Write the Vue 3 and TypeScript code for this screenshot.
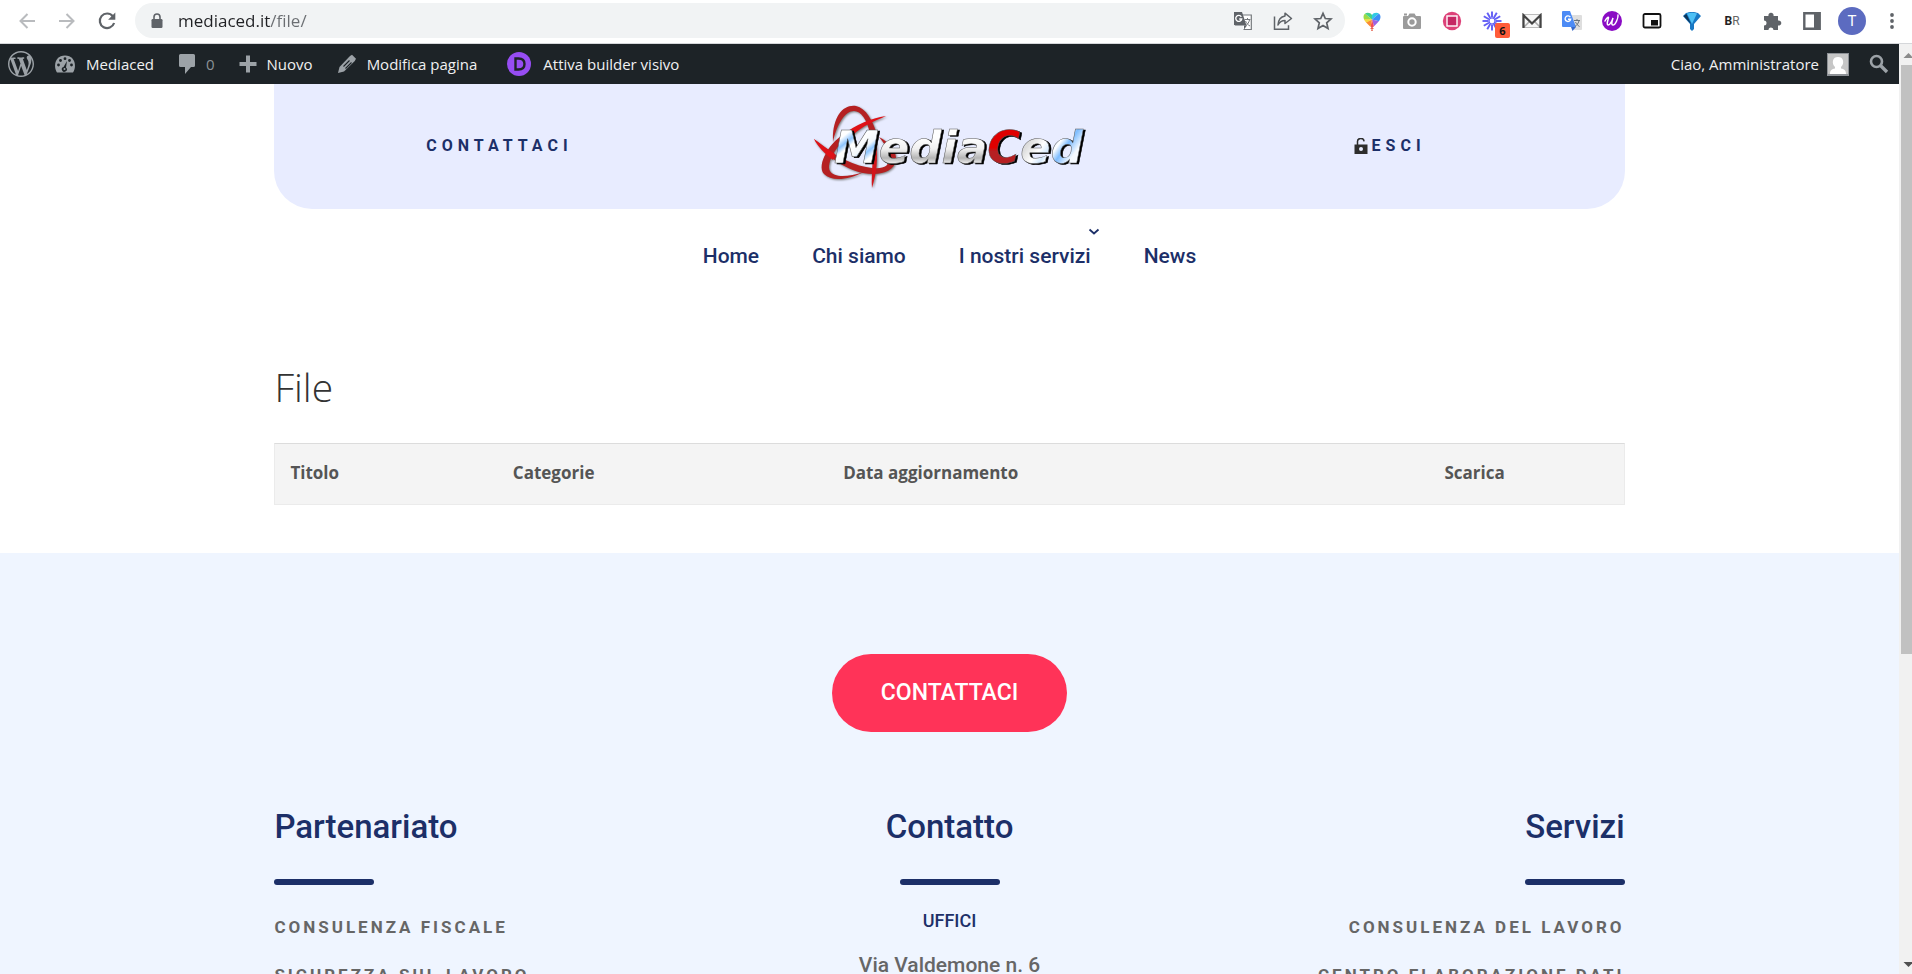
<script setup lang="ts">
import { ref } from 'vue'

interface NavItem {
  label: string
  submenu: boolean
}

const address = ref<string>('mediaced.it/file/')

const navItems: NavItem[] = [
  { label: 'Home', submenu: false },
  { label: 'Chi siamo', submenu: false },
  { label: 'I nostri servizi', submenu: true },
  { label: 'News', submenu: false },
]

const columns: string[] = ['Titolo', 'Categorie', 'Data aggiornamento', 'Scarica']
const partners: string[] = ['Consulenza fiscale', 'Sicurezza sul lavoro']
const services: string[] = ['Consulenza del lavoro', 'Centro elaborazione dati']
const rays: number[] = [0, 30, 60, 90, 120, 150, 180, 210, 240, 270, 300, 330]
</script>

<template>
  <div class="window">
    <header class="toolbar">
      <button class="tool" aria-label="Indietro">
        <svg width="18" height="18" viewBox="0 0 18 18" fill="none" stroke="#b9bbbe" stroke-width="2"><path d="M17 9H2.500M9.500 2 2.500 9l7 7" /></svg>
      </button>
      <button class="tool" aria-label="Avanti">
        <svg width="18" height="18" viewBox="0 0 18 18" fill="none" stroke="#b9bbbe" stroke-width="2"><path d="M1 9h14.500M8.500 2l7 7-7 7" /></svg>
      </button>
      <button class="tool" aria-label="Ricarica">
        <svg width="20" height="20" viewBox="0 0 20 20"><path d="M15.800 5.200A7.300 7.300 0 1 0 17.100 12" fill="none" stroke="#5f6368" stroke-width="2.200" /><path d="M18.300 1.500v7.200h-7.200z" fill="#5f6368" /></svg>
      </button>
      <div class="omnibox">
        <svg width="12" height="16" viewBox="0 0 12 16"><rect x="0.500" y="6" width="11" height="9" rx="1.200" fill="#5f6368" /><path d="M3 7V4a3 3 0 0 1 6 0v3" fill="none" stroke="#5f6368" stroke-width="1.600" /></svg>
        <input v-model="address" class="url" type="text" aria-label="Indirizzo" />
        <button class="tool" aria-label="Traduci pagina">
          <svg width="20" height="20" viewBox="0 0 20 20"><path d="M8 4h10.300v14.500H10.500" fill="#fff" stroke="#75787c" stroke-width="1.200" /><path d="M1 1h8l4.500 13.500H2.200L1 13.300z" fill="#5f6368" /><path d="M11 14.500h3l-3 4z" fill="#5f6368" /><path d="M8.300 5.800a3 3 0 1 0 .4 2.200H6.200" fill="none" stroke="#fff" stroke-width="1.400" /><path d="M11.500 8.500h6M14.500 7v1.500M16.500 9c-.6 2.500-2 4.500-4 6M12.500 10c1 2 2.500 4 4.500 5" fill="none" stroke="#75787c" /></svg>
        </button>
        <button class="tool" aria-label="Condividi">
          <svg width="20" height="20" viewBox="0 0 20 20" fill="none" stroke="#5f6368" stroke-width="1.500"><path d="M1.500 5.500v12.700h14v-4" /><path d="M12 2.200 18.500 7.500 12 12.500V9.600C8.800 9.600 6.600 11 5 14c.3-5 2.800-8.300 7-9z" stroke-linejoin="round" /></svg>
        </button>
        <button class="tool" aria-label="Aggiungi ai preferiti">
          <svg width="20" height="20" viewBox="0 0 20 20"><path d="m10 2.300 2.300 5.200 5.700.5-4.300 3.800 1.300 5.600-5-3-5 3 1.300-5.600L2 8l5.700-.5z" fill="none" stroke="#5f6368" stroke-width="1.700" /></svg>
        </button>
      </div>
      <div class="extensions">
        <button class="tool" aria-label="Tavolozza colori">
          <svg width="20" height="20" viewBox="0 0 20 20">
            <defs><clipPath id="heart"><path d="M10 17C4 12 1.500 9 1.500 5.800 1.500 1 8 .3 10 4c2-3.700 8.500-3 8.500 1.800C18.500 9 16 12 10 17z" /></clipPath></defs>
            <g clip-path="url(#heart)"><path d="M10 8.500 0 0v9z" fill="#9bdc48" /><path d="M10 8.500 0 0h10z" fill="#45d08a" /><path d="M10 8.500V0h10z" fill="#31c9e4" /><path d="M10 8.500 20 0v11z" fill="#3c8df5" /><path d="M10 8.500 20 11l-7 8z" fill="#9c64e3" /><path d="m10 8.500 3 10.500H8z" fill="#f34c56" /><path d="M10 8.500 8 19 0 13z" fill="#fb8b35" /><path d="M10 8.500 0 14V8z" fill="#f6d743" /></g>
            <path d="m10 16-2 2h4zM9 18.500h2v1.200H9z" fill="#e5624e" />
          </svg>
        </button>
        <button class="tool" aria-label="Cattura schermata">
          <svg width="20" height="18" viewBox="0 0 20 18"><path d="M2 4h4l1.500-2.500h5L14 4h4a1 1 0 0 1 1 1v11a1 1 0 0 1-1 1H2a1 1 0 0 1-1-1V5a1 1 0 0 1 1-1zM2 1.500h3v2H2z" fill="#9b9b9b" /><circle cx="10" cy="10" r="3.700" fill="none" stroke="#fff" stroke-width="2" /></svg>
        </button>
        <button class="tool" aria-label="Registra">
          <svg width="20" height="20" viewBox="0 0 20 20"><circle cx="10" cy="10" r="9.200" fill="#dd4279" /><rect x="5" y="5" width="10" height="10" fill="#c52764" stroke="#fff" stroke-width="1.400" /></svg>
        </button>
        <button class="tool with-badge" aria-label="Loom, 6 notifiche">
          <svg width="20" height="20" viewBox="0 0 20 20" stroke="#625df5" stroke-width="1.900"><path v-for="angle in rays" :key="angle" d="M10 6.500V.5" :transform="`rotate(${angle} 10 10)`" /><circle cx="10" cy="10" r="3" fill="#fff" stroke-width="1.200" /></svg>
          <span class="badge">6</span>
        </button>
        <button class="tool" aria-label="Posta">
          <svg width="20" height="16" viewBox="0 0 20 16"><path d="M1 1.500h18v13H1z" fill="#f7f7f7" stroke="#bbb" /><path d="m2 14 6-6M18 14l-6-6" stroke="#aaa" stroke-width="1.500" /><path d="M1.500 15V2.200L10 10.500l8.500-8.300V15" fill="none" stroke="#444" stroke-width="2.200" /></svg>
        </button>
        <button class="tool" aria-label="Google Traduttore">
          <svg width="20" height="20" viewBox="0 0 20 20"><path d="M7 4h12a1 1 0 0 1 1 1v13a1 1 0 0 1-1 1h-7z" fill="#dedede" /><path d="M1 0h7l6 16H1a1 1 0 0 1-1-1V1a1 1 0 0 1 1-1z" fill="#4c8bf5" /><path d="M9 16h5l-3.500 4z" fill="#3568c9" /><path d="M8.300 6.200a2.800 2.800 0 1 0 .4 2H6" fill="none" stroke="#fff" stroke-width="1.400" /><path d="M12 9.500h6M15 8v1.500M17 10c-1 3-2.500 4.500-4 5.500M13.500 11c1 2 2 3.200 4 4.500" fill="none" stroke="#68737c" /></svg>
        </button>
        <button class="tool" aria-label="Wordtune">
          <svg width="20" height="20" viewBox="0 0 20 20"><circle cx="10" cy="10" r="10" fill="#8a0bc4" /><path d="M3 10c1.500-3 3.500-4.500 3.500-3.500 0 1.500-2.500 7-.5 7.500 2 .5 4.500-5 5-7-.7 2-2.200 7 0 7 2.500 0 5.500-7.500 5-10" fill="none" stroke="#fff" stroke-width="1.500" stroke-linecap="round" /></svg>
        </button>
        <button class="tool" aria-label="Picture in picture">
          <svg width="20" height="16" viewBox="0 0 20 16"><rect x="1.500" y="1" width="17" height="13.500" rx="1.500" fill="#fff" stroke="#111" stroke-width="1.800" /><path d="M9 7h7v5.500H9z" fill="#111" /></svg>
        </button>
        <button class="tool" aria-label="Gemma">
          <svg width="20" height="20" viewBox="0 0 20 20"><path d="M4 2c3-1.500 9-1.500 12 0l3 3-7 8v5l-2 2-2-2v-5L1 5z" fill="#1878c4" /><path d="M5 2.500c3-1 7-1 10 0L10 13z" fill="#4cc0f5" /><path d="m1.500 5 3-2L9 13z" fill="#0e3558" /></svg>
        </button>
        <button class="tool br" aria-label="BR"><b>B</b>R</button>
        <button class="tool" aria-label="Estensioni">
          <svg width="20" height="20" viewBox="0 0 20 20"><path d="M2 5h4.500a2.600 2.600 0 1 1 5 0H16v4.500a2.600 2.600 0 1 1 0 5V19h-4.500a2.500 2.500 0 0 0-5 0H2v-4.500a2.500 2.500 0 0 0 0-5z" fill="#5f6368" /></svg>
        </button>
        <button class="tool" aria-label="Pannello laterale">
          <svg width="18" height="18" viewBox="0 0 18 18"><path d="M1.300 1.300h15.400v15.400H1.300z" fill="#fff" stroke="#5f6368" stroke-width="2.400" /><path d="M11 1h6v16h-6z" fill="#5f6368" /></svg>
        </button>
        <button class="tool" aria-label="Profilo"><span class="profile">T</span></button>
        <button class="tool" aria-label="Menu">
          <svg width="6" height="18" viewBox="0 0 6 18" fill="#5f6368"><circle cx="3" cy="3" r="1.900" /><circle cx="3" cy="9" r="1.900" /><circle cx="3" cy="15" r="1.900" /></svg>
        </button>
      </div>
    </header>

    <div class="viewport">
      <div class="page">
        <nav class="adminbar" aria-label="Barra degli strumenti">
          <a href="#" aria-label="WordPress">
            <svg width="26" height="26" viewBox="0 0 20 20"><path d="M20 10c0-5.510-4.490-10-10-10C4.480 0 0 4.490 0 10c0 5.520 4.480 10 10 10 5.510 0 10-4.480 10-10zM7.780 15.370L4.370 6.220c.55-.02 1.170-.08 1.170-.08.5-.06.44-1.130-.06-1.110 0 0-1.450.11-2.370.11-.18 0-.37 0-.58-.01C4.120 2.690 6.870 1.110 10 1.110c2.330 0 4.450.87 6.050 2.340-.68-.11-1.650.39-1.650 1.580 0 .74.45 1.360.9 2.100.35.610.55 1.360.55 2.460 0 1.490-1.400 5-1.400 5l-3.030-8.370c.54-.02.82-.17.82-.17.5-.05.44-1.250-.06-1.220 0 0-1.440.12-2.380.12-.87 0-2.330-.12-2.330-.12-.5-.03-.56 1.200-.06 1.220l.92.080 1.260 3.410zM17.410 10c.24-.64.74-1.870.43-4.250.7 1.290 1.050 2.710 1.050 4.250 0 3.290-1.730 6.240-4.400 7.780.97-2.590 1.940-5.200 2.920-7.780zM6.100 18.090C3.120 16.650 1.110 13.530 1.110 10c0-1.300.23-2.480.72-3.590C3.250 10.300 4.670 14.200 6.100 18.090zm4.030-6.630l2.580 6.980c-.86.290-1.760.45-2.710.45-.79 0-1.570-.11-2.290-.33.81-2.380 1.620-4.740 2.420-7.100z" fill="#9ca2a7" /></svg>
          </a>
          <a href="#" class="site">
            <svg width="22" height="20" viewBox="0 0 22 20"><path d="M3 18.500C-1.500 11 2 1.500 11 1.500s12.500 9.500 8 17z" fill="#9ca2a7" /><g fill="#1d2327"><circle cx="4.500" cy="11" r="1.400" /><circle cx="6.500" cy="6.500" r="1.400" /><circle cx="11" cy="4.700" r="1.400" /><circle cx="15.500" cy="6.500" r="1.400" /><circle cx="17.500" cy="11" r="1.400" /><path d="m13 7-1 6.500a2.500 2.500 0 1 1-2.500-.5z" /></g><circle cx="10.500" cy="15" r="1" fill="#9ca2a7" /></svg>
            <span>Mediaced</span>
          </a>
          <a href="#" class="comments">
            <svg width="18" height="22" viewBox="0 0 18 22"><path d="M2.500 1h13A1.500 1.500 0 0 1 17 2.500v10a1.500 1.500 0 0 1-1.500 1.500H13l-6 7v-7H2.500A1.500 1.500 0 0 1 1 12.500v-10A1.500 1.500 0 0 1 2.500 1z" fill="#9ca2a7" /></svg>
            <span>0</span>
          </a>
          <a href="#">
            <svg width="18" height="18" viewBox="0 0 18 18"><path d="M7 .5h4V7h6.500v4H11v6.500H7V11H.5V7H7z" fill="#9ca2a7" /></svg>
            <span>Nuovo</span>
          </a>
          <a href="#">
            <svg width="20" height="20" viewBox="0 0 20 20"><path d="m13 2 2-1.300 4 4L17.800 7 7 17.500 1 19l1.500-6z" fill="#9ca2a7" /><path d="m6.500 12.500 6-6M8.500 14.500l6-6" stroke="#1d2327" stroke-width="1.100" /></svg>
            <span>Modifica pagina</span>
          </a>
          <a href="#" class="builder">
            <svg width="24" height="24" viewBox="0 0 24 24"><circle cx="12" cy="12" r="12" fill="#974df3" /><path d="M8.500 6.500h3c3.700 0 6 1.900 6 5.500s-2.300 5.500-6 5.500h-3z" fill="none" stroke="#1d2327" stroke-width="2.400" /></svg>
            <span>Attiva builder visivo</span>
          </a>
          <a href="#" class="account">
            <span>Ciao, Amministratore</span>
            <svg width="22" height="23" viewBox="0 0 22 23"><path d="M0 0h22v23H0z" fill="#8d9196" /><path d="M1 1h20v20H1z" fill="#c6c6c6" /><path d="M3 21c0-4 2-5 5-5.500V14c-2-2-2.500-4-2-6.500C6.500 5 8.500 4 11 4s4.500 1 5 3.500c.5 2.500 0 4.500-2 6.500v1.500c3 .5 5 1.500 5 5.500z" fill="#fff" /></svg>
          </a>
          <button class="search" aria-label="Cerca">
            <svg width="20" height="20" viewBox="0 0 20 20" fill="none" stroke="#9ca2a7"><circle cx="7.500" cy="7.500" r="5.500" stroke-width="2.600" /><path d="m11.500 11.500 6.500 6.500" stroke-width="3.400" /></svg>
          </button>
        </nav>

        <div class="container">
          <div class="masthead">
            <a href="#" class="spaced">Contattaci</a>
            <a href="#" class="logo">
              <svg width="276" height="90" viewBox="32 20 276 90" role="img" aria-label="MediaCed">
                <defs>
                  <linearGradient id="initial" gradientUnits="userSpaceOnUse" x1="60" y1="48" x2="92" y2="88"><stop offset="0.150" stop-color="#fff" /><stop offset="0.280" stop-color="#8cc4ff" /><stop offset="0.380" stop-color="#fff" /><stop offset="0.580" stop-color="#f2f7fc" /><stop offset="0.680" stop-color="#8cc4ff" /><stop offset="0.800" stop-color="#fff" /></linearGradient>
                  <linearGradient id="silver" gradientUnits="userSpaceOnUse" x1="0" y1="50" x2="0" y2="83"><stop offset="0.200" stop-color="#fff" /><stop offset="0.550" stop-color="#f0f0f0" /><stop offset="0.820" stop-color="#b4b4b4" /><stop offset="1" stop-color="#f4f4f4" /></linearGradient>
                  <linearGradient id="ending" gradientUnits="userSpaceOnUse" x1="250" y1="50" x2="300" y2="86"><stop offset="0.100" stop-color="#ddd" /><stop offset="0.300" stop-color="#fff" /><stop offset="0.420" stop-color="#d5e9fc" /><stop offset="0.500" stop-color="#fff" /><stop offset="0.620" stop-color="#7dbcff" /><stop offset="0.800" stop-color="#f6faff" /></linearGradient>
                  <linearGradient id="red" gradientUnits="userSpaceOnUse" x1="0" y1="50" x2="0" y2="83"><stop offset="0.500" stop-color="#df0000" /><stop offset="0.620" stop-color="#b52022" /></linearGradient>
                </defs>
                <g class="swirl">
                  <path d="M53 61C52 36 63 23 76 25c10 2 17 15 21 29l-6 2C87 38 81 30 74 30c-9 0-17 13-21 31z" fill="#b52022" />
                  <path d="M66 52C50 60 36 84 44 93c8 8 24 6 40-2-16 5-30 6-34-1-4-8 6-26 22-38z" fill="#b52022" />
                  <path d="M106 35c-15 2-31 9-42 18l9 1c9-9 22-14 33-19z" fill="#df1117" />
                  <path d="M34 58c14 12 34 25 52 28 15 3 24 1 23-10-1-8-5-14-10-20 10 5 18 14 17 23-2 12-16 16-33 13C64 88 45 74 34 58z" fill="#b52022" />
                  <path d="M34 58c4 8 11 15 19 21l2-6c-8-5-14-10-21-15z" fill="#df1117" />
                  <path d="M96 62c2 15 1 29-4 45-1-15 2-29 0-44z" fill="#d3151b" />
                </g>
                <text class="wordmark" x="54" y="82"><tspan fill="url(#initial)">M</tspan><tspan fill="url(#silver)">edia</tspan><tspan fill="url(#red)">C</tspan><tspan fill="url(#ending)">ed</tspan></text>
              </svg>
            </a>
            <a href="#" class="spaced logout">
              <svg width="14" height="16" viewBox="0 0 14 16"><path d="M.5 6.500h13V16H.5z" fill="#2d2d2d" /><path d="M3.500 7V4a3.300 3.300 0 0 1 6.600-.6" fill="none" stroke="#2d2d2d" stroke-width="1.500" /><circle cx="7" cy="11" r="2" fill="#e8ecff" /></svg>
              <span>Esci</span>
            </a>
          </div>

          <nav class="menu" aria-label="Menu principale">
            <a v-for="item in navItems" :key="item.label" href="#">
              {{ item.label }}
              <svg v-if="item.submenu" class="chevron" width="12" height="8" viewBox="0 0 12 8" fill="none" stroke="#1c2f68" stroke-width="1.800"><path d="m1.500 1.500 4.500 4 4.500-4" /></svg>
            </a>
          </nav>

          <main>
            <h1>File</h1>
            <table>
              <thead>
                <tr><th v-for="column in columns" :key="column" scope="col">{{ column }}</th></tr>
              </thead>
            </table>
          </main>
        </div>

        <footer>
          <div class="container footer-inner">
            <a href="#" class="cta">Contattaci</a>
            <div class="footer-columns">
              <section>
                <h2>Partenariato</h2>
                <ul><li v-for="item in partners" :key="item"><a href="#">{{ item }}</a></li></ul>
              </section>
              <section class="contact">
                <h2>Contatto</h2>
                <h3>Uffici</h3>
                <p>Via Valdemone n. 6</p>
              </section>
              <section class="services">
                <h2>Servizi</h2>
                <ul><li v-for="item in services" :key="item"><a href="#">{{ item }}</a></li></ul>
              </section>
            </div>
          </div>
        </footer>
      </div>
      <div class="scrollbar">
        <svg width="17" height="21" viewBox="0 0 17 21"><path d="m4.500 14 5-5 5 5z" fill="#8b8b8b" /></svg>
        <div class="track"><div class="thumb"></div></div>
        <svg width="17" height="17" viewBox="0 0 17 17"><path d="m4.500 5 5 5 5-5z" fill="#505050" /></svg>
      </div>
    </div>
  </div>
</template>

<style>
body {
  margin: 0;
}
</style>

<style scoped>
.window {
  display: flex;
  flex-direction: column;
  height: 100vh;
  overflow: hidden;
  background: #fff;
  font-family: Roboto, "Liberation Sans", sans-serif;
}

a {
  color: inherit;
  text-decoration: none;
}

button {
  padding: 0;
  border: 0;
  background: none;
  font: inherit;
  cursor: pointer;
}

svg {
  display: block;
  flex: none;
}

.toolbar {
  display: flex;
  flex: none;
  align-items: center;
  padding: 3px 0 5px 7px;
  border-bottom: 1px solid #d5d7da;
}

.tool {
  display: flex;
  flex: none;
  align-items: center;
  justify-content: center;
  width: 40px;
  height: 35px;
}

.omnibox {
  display: flex;
  flex: 1;
  align-items: center;
  height: 35px;
  margin: 0 7px 0 8px;
  padding: 0 2px 0 16px;
  border-radius: 18px;
  background: #f1f3f4;
}

.url {
  flex: 1;
  min-width: 0;
  margin-left: 15px;
  padding: 0;
  border: 0;
  outline: 0;
  background: linear-gradient(90deg, #202124 92px, #6b6e72 92px);
  background-clip: text;
  color: transparent;
  font: 17px/24px "Open Sans", "Noto Sans", sans-serif;
}

.extensions {
  display: flex;
}

.with-badge {
  position: relative;
}

.badge {
  position: absolute;
  right: 2px;
  bottom: 0;
  width: 15px;
  border-radius: 2px;
  background: #ff5c3a;
  color: #111;
  font: 700 11px/15px "Open Sans", sans-serif;
  text-align: center;
}

.br {
  color: #666;
  font-size: 12px;
}

.br b {
  color: #222;
}

.profile {
  width: 28px;
  border-radius: 50%;
  background: #5c6bc0;
  color: #fff;
  font-size: 15px;
  line-height: 28px;
}

.viewport {
  display: flex;
  flex: 1;
  min-height: 0;
}

.page {
  display: flex;
  flex: 1;
  flex-direction: column;
  min-width: 0;
  overflow: hidden;
}

.adminbar {
  display: flex;
  flex: none;
  align-items: center;
  gap: 24px;
  height: 40px;
  padding: 0 10px 0 8px;
  background: #1d2327;
  color: #f0f0f1;
  font: 15px/20px "Open Sans", "Noto Sans", sans-serif;
}

.adminbar a {
  display: flex;
  align-items: center;
  gap: 10px;
}

.adminbar .site {
  margin-left: -4px;
}

.adminbar .comments {
  color: #8c9196;
}

.adminbar .builder {
  gap: 12px;
  margin-left: 6px;
}

.adminbar .account {
  gap: 8px;
  margin-right: -4px;
  margin-left: auto;
}

.container {
  width: 71.1%;
  margin: 0 auto;
}

.masthead {
  display: grid;
  box-sizing: border-box;
  grid-template-columns: repeat(3, 1fr);
  align-items: center;
  justify-items: center;
  height: 125px;
  padding-bottom: 2px;
  border-radius: 0 0 38px 38px;
  background: #e8ecff;
}

.spaced {
  display: flex;
  align-items: center;
  color: #1c2f68;
  font-size: 16px;
  font-weight: 700;
  line-height: 20px;
  letter-spacing: 5px;
  text-transform: uppercase;
}

.logout {
  gap: 4px;
  padding-right: 20px;
}

.swirl {
  filter: drop-shadow(1px 1px 1px #777);
}

.wordmark {
  font: italic 700 45px "DejaVu Sans", sans-serif;
  stroke: #555;
  stroke-width: 0.500px;
  filter: drop-shadow(2px 1px 0 #000);
}

.menu {
  display: flex;
  justify-content: center;
  gap: 53px;
  padding: 35px 0 100px;
  color: #1c2f68;
  font-size: 21px;
  font-weight: 500;
  line-height: 24px;
}

.menu a {
  position: relative;
}

.chevron {
  position: absolute;
  top: -16px;
  right: -9px;
}

h1,
h2,
h3,
p,
ul {
  margin: 0;
  padding: 0;
  font-weight: 500;
}

h1 {
  margin-bottom: 38px;
  color: #333;
  font: 300 39px/37px "Open Sans", "Noto Sans", sans-serif;
}

table {
  width: 100%;
  margin-bottom: 48px;
  border: 1px solid #ebebeb;
  border-top-color: #dcdcdc;
  border-spacing: 0;
  background: #f4f4f4;
  table-layout: fixed;
}

th {
  box-sizing: border-box;
  padding: 17px 15px 19px;
  color: #555;
  font: 700 17px/24px "Open Sans", "Noto Sans", sans-serif;
  text-align: left;
}

th:nth-child(1) {
  width: 16.5%;
}

th:nth-child(2) {
  width: 24.5%;
}

th:nth-child(3) {
  width: 44.6%;
}

footer {
  flex: 1 0 auto;
  background: #eff5ff;
}

.footer-inner {
  display: flex;
  flex-direction: column;
  align-items: center;
  padding-top: 101px;
}

.cta {
  padding: 24px 49px;
  border-radius: 39px;
  background: #ff3358;
  color: #fff;
  font-size: 23px;
  font-weight: 500;
  line-height: 30px;
  text-transform: uppercase;
}

.footer-columns {
  display: grid;
  grid-template-columns: repeat(3, 1fr);
  width: 100%;
  padding-top: 77px;
}

h2 {
  color: #1c2f68;
  font-size: 33px;
  line-height: 36px;
}

h2::after {
  display: block;
  width: 100px;
  height: 6px;
  margin-top: 34px;
  border-radius: 3px;
  background: #1c2f68;
  content: "";
}

ul {
  display: grid;
  gap: 20px;
  padding-top: 28px;
  color: #666;
  font-size: 17px;
  font-weight: 700;
  line-height: 28px;
  letter-spacing: 3px;
  list-style: none;
  text-transform: uppercase;
}

.contact {
  text-align: center;
}

.contact h2::after {
  margin-right: auto;
  margin-left: auto;
}

.contact h3 {
  padding-top: 22px;
  color: #1c2f68;
  font-size: 18px;
  line-height: 28px;
  text-transform: uppercase;
}

.contact p {
  padding-top: 16px;
  color: #666;
  font-size: 21px;
  line-height: 28px;
}

.services {
  text-align: right;
}

.services h2::after {
  margin-left: auto;
}

.scrollbar {
  display: flex;
  flex: none;
  flex-direction: column;
  width: 13px;
  overflow: hidden;
  background: #f1f1f1;
}

.track {
  flex: 1;
  padding-left: 2px;
}

.thumb {
  height: 66%;
  background: #c1c1c1;
}
</style>
